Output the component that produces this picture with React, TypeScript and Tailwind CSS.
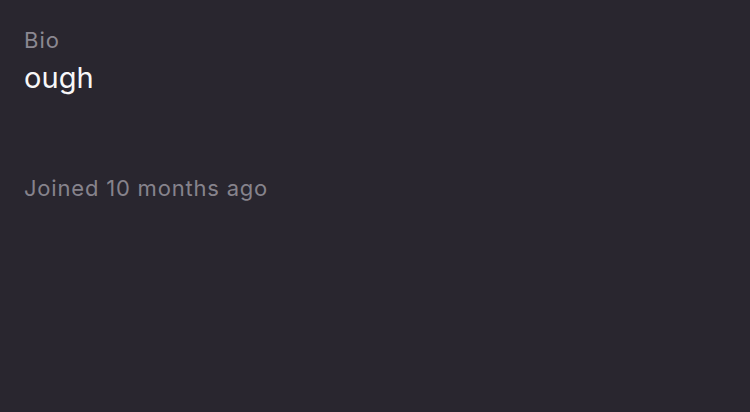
export default function App() {
  return (
    <div className="min-h-screen w-full bg-[#29262f] px-6 pt-[26px] font-['Inter',sans-serif]">
      <div className="flex flex-col">
        <span className="text-[22px] leading-[28px] tracking-[1px] text-[#8b8891]">Bio</span>
        <span className="mt-[6px] text-[29px] leading-[36px] tracking-[0.1px] text-[#f7f7f8]">ough</span>
      </div>
      <p className="mt-[78px] text-[22px] leading-[28px] tracking-[0.8px] text-[#86838c]">Joined 10 months ago</p>
    </div>
  );
}
